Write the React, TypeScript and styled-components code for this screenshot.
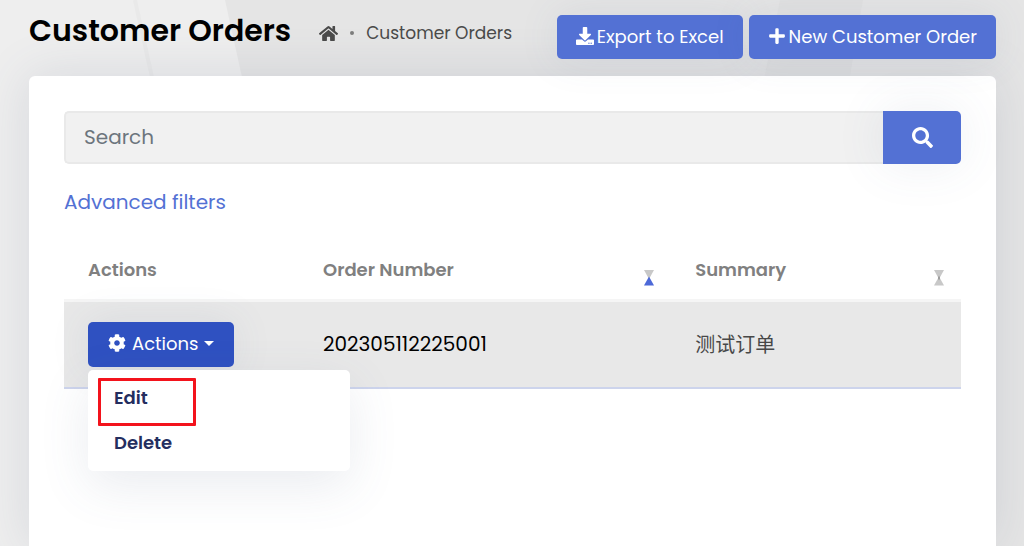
import React from 'react';
import styled, { createGlobalStyle } from 'styled-components';
import { FaCog, FaDownload, FaHome, FaPlus, FaSearch } from 'react-icons/fa';

const GlobalStyle = createGlobalStyle`
  *, *::before, *::after { box-sizing: border-box; }
  body {
    margin: 0;
    background: #e5e5e5;
    color: #000;
    font-family: Poppins, Inter, "Noto Sans CJK SC", sans-serif;
    font-size: 18px;
  }
  button, input { font: inherit; }
`;

const Page = styled.div`
  position: relative;
  display: flex;
  flex-direction: column;
  min-height: 100vh;
  padding: 15px 28px 0 29px;
  overflow: hidden;
`;

const Backdrop = styled.svg`
  position: absolute;
  inset: 0;
  width: 100%;
  height: 100%;
`;

const Header = styled.header`
  position: relative;
  z-index: 1;
  display: flex;
  align-items: center;
  justify-content: space-between;
  padding-bottom: 17px;
`;

const Heading = styled.div`
  display: flex;
  align-items: center;
  gap: 28px;
  white-space: nowrap;
`;

const Title = styled.h1`
  margin: 0;
  padding-bottom: 12px;
  font-size: 30px;
  line-height: 32px;
  font-weight: 600;
`;

const Breadcrumb = styled.nav`
  display: flex;
  align-items: center;
  gap: 12px;
  padding-bottom: 8px;
  color: #4a4a4a;
  font-size: 17px;
  line-height: 24px;

  a { display: flex; color: inherit; }
  a svg { width: 19px; height: 17px; }
`;

const Dot = styled.span`
  width: 4px;
  height: 4px;
  border-radius: 50%;
  background: #7c7c7c;
`;

const ButtonGroup = styled.div`
  display: flex;
  gap: 6px;
`;

const Button = styled.button<{ $active?: boolean }>`
  display: flex;
  align-items: center;
  gap: ${(p) => (p.$active ? 6 : 3)}px;
  height: ${(p) => (p.$active ? 45 : 44)}px;
  padding: 0 ${(p) => (p.$active ? 20 : 19)}px 2px;
  border: 0;
  border-radius: 5px;
  background: ${(p) => (p.$active ? '#2f51c1' : '#5371d4')};
  color: #fff;
  font-size: 18px;
  white-space: nowrap;
  box-shadow: 0 0 40px rgba(82, 100, 135, 0.1);
`;

const Caret = styled.span`
  border: 5px solid transparent;
  border-top-color: #fff;
  border-bottom: 0;
`;

const Card = styled.main`
  position: relative;
  flex: 1;
  padding: 35px;
  border-radius: 6px 6px 0 0;
  background: #fff;
  box-shadow: 0 0 50px rgba(82, 95, 125, 0.15);
`;

const SearchBar = styled.form`
  display: flex;
  height: 53px;
`;

const SearchInput = styled.input`
  flex: 1;
  min-width: 0;
  padding: 0 18px 2px;
  border: 2px solid #e9e9e9;
  border-right: 0;
  border-radius: 5px 0 0 5px;
  background: #f1f1f1;
  font-size: 20px;

  &::placeholder { color: #6c757d; opacity: 1; }
`;

const SearchButton = styled.button`
  display: flex;
  align-items: center;
  justify-content: center;
  width: 78px;
  border: 0;
  border-radius: 0 5px 5px 0;
  background: #5371d4;
  color: #fff;
  box-shadow: 0 0 50px rgba(82, 100, 135, 0.1);
`;

const FilterLink = styled.a`
  display: inline-block;
  margin: 24px 0;
  color: #5371d4;
  font-size: 20px;
  line-height: 28px;
  text-decoration: none;
`;

const Table = styled.table`
  width: 100%;
  border-collapse: collapse;
  table-layout: fixed;
`;

const HeadCell = styled.th<{ $width?: string }>`
  width: ${(p) => p.$width ?? 'auto'};
  height: 60px;
  padding: 18px 17px 0 24px;
  vertical-align: top;
  border-bottom: 3px solid #f5f5f5;
  color: #808080;
  font-weight: 600;
  font-size: 18px;
  text-align: left;
`;

const HeadContent = styled.div`
  display: flex;
  align-items: flex-start;
  justify-content: space-between;
  line-height: 24px;
`;

const SortButton = styled.button`
  display: flex;
  padding: 12px 0 0;
  border: 0;
  background: none;
`;

const Cell = styled.td`
  height: 88px;
  padding: 0 24px;
  border-bottom: 2px solid #cdd4ec;
  background: #e8e8e8;
  font-size: 20px;
`;

const SummaryCell = styled(Cell)`
  color: #484848;
`;

const Dropdown = styled.div`
  position: relative;
  width: max-content;
`;

const Menu = styled.ul`
  position: absolute;
  z-index: 2;
  top: 100%;
  left: 0;
  width: 262px;
  margin: 3px 0 0;
  padding: 5px 0 6px;
  border-radius: 5px;
  background: #fff;
  list-style: none;
  box-shadow: 0 15px 50px rgba(82, 100, 135, 0.12);
`;

const MenuItem = styled.li<{ $outlined?: boolean }>`
  position: relative;

  &::after {
    content: '';
    display: ${(p) => (p.$outlined ? 'block' : 'none')};
    position: absolute;
    inset: 3px 154px -6px 10px;
    border: 3px solid #f3131c;
    border-radius: 1px;
    pointer-events: none;
  }

  button {
    display: block;
    width: 100%;
    height: 45px;
    padding: 0 26px;
    border: 0;
    background: none;
    color: #242e5f;
    font-size: 18px;
    font-weight: 600;
    text-align: left;
  }
`;

function SortIcon({ ascending = false }: { ascending?: boolean }) {
  return (
    <svg width="10" height="16" viewBox="0 0 10 16" aria-hidden="true">
      <path d="M0 0H10L5 9Z" fill="#c8c8c8" />
      <path d="M0 15.5H10L5 6.5Z" fill={ascending ? '#4d69d8' : '#c8c8c8'} />
      {!ascending && <path d="M5 5.5L6 8L5 10.5L4 8Z" fill="#929292" />}
    </svg>
  );
}

export default function App() {
  return (
    <>
      <GlobalStyle />
      <Page>
        <Backdrop aria-hidden="true">
          <path d="M0 0H225L345 546H0Z" fill="#eeeeee" />
          <path d="M135 0L255 546" stroke="#e9e9e9" strokeWidth="4" />
          <path d="M780 0H863L770 546H670Z" fill="#e1e1e1" />
        </Backdrop>
        <Header>
          <Heading>
            <Title>Customer Orders</Title>
            <Breadcrumb aria-label="Breadcrumb">
              <a href="#home" aria-label="Home"><FaHome /></a>
              <Dot />
              <span>Customer Orders</span>
            </Breadcrumb>
          </Heading>
          <ButtonGroup>
            <Button type="button"><FaDownload />Export to Excel</Button>
            <Button type="button"><FaPlus />New Customer Order</Button>
          </ButtonGroup>
        </Header>
        <Card>
          <SearchBar onSubmit={(e) => e.preventDefault()}>
            <SearchInput type="text" placeholder="Search" aria-label="Search" />
            <SearchButton type="submit" aria-label="Search"><FaSearch size={21} /></SearchButton>
          </SearchBar>
          <FilterLink href="#filters">Advanced filters</FilterLink>
          <Table>
            <thead>
              <tr>
                <HeadCell $width="26.2%"><HeadContent>Actions</HeadContent></HeadCell>
                <HeadCell $width="41.5%">
                  <HeadContent>
                    Order Number
                    <SortButton type="button" aria-label="Sort by order number"><SortIcon ascending /></SortButton>
                  </HeadContent>
                </HeadCell>
                <HeadCell>
                  <HeadContent>
                    Summary
                    <SortButton type="button" aria-label="Sort by summary"><SortIcon /></SortButton>
                  </HeadContent>
                </HeadCell>
              </tr>
            </thead>
            <tbody>
              <tr>
                <Cell>
                  <Dropdown>
                    <Button type="button" $active aria-haspopup="menu" aria-expanded="true">
                      <FaCog />Actions<Caret />
                    </Button>
                    <Menu>
                      <MenuItem $outlined><button type="button">Edit</button></MenuItem>
                      <MenuItem><button type="button">Delete</button></MenuItem>
                    </Menu>
                  </Dropdown>
                </Cell>
                <Cell>202305112225001</Cell>
                <SummaryCell>测试订单</SummaryCell>
              </tr>
            </tbody>
          </Table>
        </Card>
      </Page>
    </>
  );
}
